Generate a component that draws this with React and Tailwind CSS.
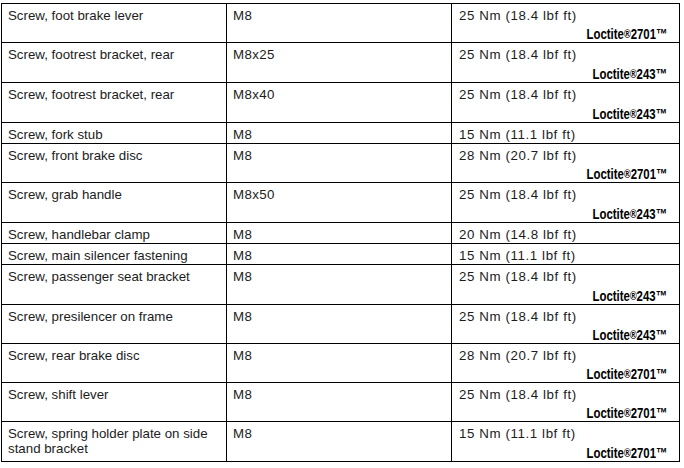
const rows = [
  { name: 'Screw, foot brake lever', thread: 'M8', torque: '25 Nm (18.4 lbf ft)', loctite: '2701', h: 'h-[39px]' },
  { name: 'Screw, footrest bracket, rear', thread: 'M8x25', torque: '25 Nm (18.4 lbf ft)', loctite: '243', h: 'h-[40px]' },
  { name: 'Screw, footrest bracket, rear', thread: 'M8x40', torque: '25 Nm (18.4 lbf ft)', loctite: '243', h: 'h-[40px]' },
  { name: 'Screw, fork stub', thread: 'M8', torque: '15 Nm (11.1 lbf ft)', h: 'h-[21px]' },
  { name: 'Screw, front brake disc', thread: 'M8', torque: '28 Nm (20.7 lbf ft)', loctite: '2701', h: 'h-[39px]' },
  { name: 'Screw, grab handle', thread: 'M8x50', torque: '25 Nm (18.4 lbf ft)', loctite: '243', h: 'h-[40px]' },
  { name: 'Screw, handlebar clamp', thread: 'M8', torque: '20 Nm (14.8 lbf ft)', h: 'h-[21px]' },
  { name: 'Screw, main silencer fastening', thread: 'M8', torque: '15 Nm (11.1 lbf ft)', h: 'h-[21px]' },
  { name: 'Screw, passenger seat bracket', thread: 'M8', torque: '25 Nm (18.4 lbf ft)', loctite: '243', h: 'h-[40px]' },
  { name: 'Screw, presilencer on frame', thread: 'M8', torque: '25 Nm (18.4 lbf ft)', loctite: '243', h: 'h-[39px]' },
  { name: 'Screw, rear brake disc', thread: 'M8', torque: '28 Nm (20.7 lbf ft)', loctite: '2701', h: 'h-[39px]' },
  { name: 'Screw, shift lever', thread: 'M8', torque: '25 Nm (18.4 lbf ft)', loctite: '2701', h: 'h-[39px]' },
  { name: 'Screw, spring holder plate on side stand bracket', thread: 'M8', torque: '15 Nm (11.1 lbf ft)', loctite: '2701', h: 'h-[39px]' },
]

// Loctite label: bold, squeezed sideways to look like a narrow face
function Loctite({ code }) {
  return (
    <div className="self-end mr-[12px] text-[15px] font-bold leading-[16px] text-black origin-right scale-x-[0.76]">
      Loctite<sup className="text-[12px] relative top-[-1px]">®</sup>{code}™
    </div>
  )
}

export default function App() {
  return (
    <div className="w-[684px] h-[468px] bg-white pt-[3px] pl-[1px] font-['Liberation_Sans',Arial,sans-serif] text-[13.3px] leading-[15px] text-[#1c1c1c]">
      <div className="w-[679px] border border-black">
        {rows.map((r, i) => (
          <div key={i} className={`grid grid-cols-[225px_225px_1fr] ${r.h} ${i < rows.length - 1 ? 'border-b' : ''} border-black`}>
            <div className="border-r border-black pl-[6px] pr-[4px] pt-[4px]">{r.name}</div>
            <div className="border-r border-black pl-[6px] pt-[4px] tracking-[0.4px]">{r.thread}</div>
            <div className="flex flex-col justify-between pl-[7px] pt-[4px]">
              <div className="tracking-[0.6px]">{r.torque}</div>
              {r.loctite && <Loctite code={r.loctite} />}
            </div>
          </div>
        ))}
      </div>
    </div>
  )
}
